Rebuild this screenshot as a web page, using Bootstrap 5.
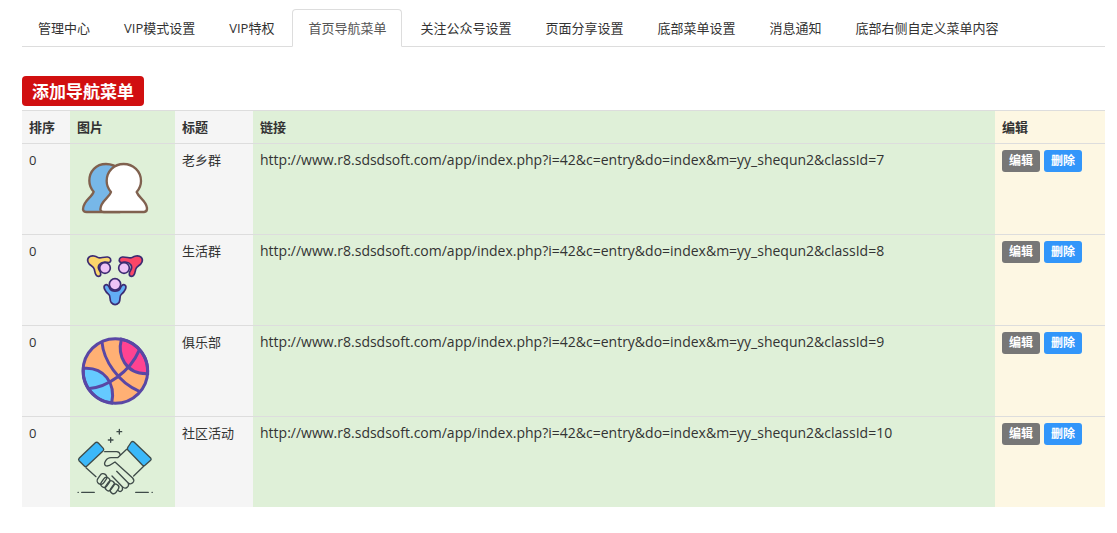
<!DOCTYPE html>
<html lang="zh-CN">
<head>
<meta charset="utf-8">
<meta name="viewport" content="width=device-width, initial-scale=1">
<title>首页导航菜单</title>
<link href="https://cdn.jsdelivr.net/npm/bootstrap@5.3.0/dist/css/bootstrap.min.css" rel="stylesheet">
<style>
body{font-family:"Open Sans","Noto Sans CJK SC",sans-serif;font-size:13px;line-height:20px;color:#333}
.page{padding:9px 12px 24px 22px}
.nav-tabs{--bs-nav-tabs-border-color:#ddd;--bs-nav-tabs-border-radius:4px;--bs-nav-link-color:#333;--bs-nav-link-hover-color:#333;--bs-nav-tabs-link-active-color:#555;--bs-nav-tabs-link-active-border-color:#ddd #ddd #fff;--bs-nav-link-padding-x:15px;--bs-nav-link-padding-y:8px;column-gap:2px;margin-bottom:29px}
.add-btn{background:#d10f10;color:#fff;font-size:17px;line-height:22px;font-weight:700;padding:5px 10px 3px;border-radius:4px;margin-bottom:4px}
.add-btn:hover{background:#b00c0d;color:#fff}
.menu-table{--bs-table-color:#333;border-top:1px solid #ddd;table-layout:fixed}
.menu-table>thead{vertical-align:middle}
.menu-table>:not(caption)>*>*{padding:6px 7px;border-width:0;color:#333}
.menu-table th{font-weight:700}
.menu-table tbody tr{border-top:1px solid #ddd}
.menu-table .link-cell{font-size:14px}
.c-gray{background:#f5f5f5!important}
.c-green{background:#dff0d8!important}
.c-cream{background:#fdf7e3!important}
.w-sort{width:48px}.w-pic{width:105px}.w-title{width:78px}.w-edit{width:110px}
.op{font-size:12px;line-height:14px;font-weight:700;padding:4px 7px;border:0;border-radius:3px;color:#fff}
.op-edit{background:#777}
.op-del{background:#3296fa}
.op:hover{color:#fff;opacity:.9}
.pic{display:block;width:76px;height:76px;margin:1px 0}
</style>
</head>
<body>
<main class="page">
<ul class="nav nav-tabs">
<li class="nav-item"><a class="nav-link" href="#">管理中心</a></li>
<li class="nav-item"><a class="nav-link" href="#">VIP模式设置</a></li>
<li class="nav-item"><a class="nav-link" href="#">VIP特权</a></li>
<li class="nav-item"><a class="nav-link active" aria-current="page" href="#">首页导航菜单</a></li>
<li class="nav-item"><a class="nav-link" href="#">关注公众号设置</a></li>
<li class="nav-item"><a class="nav-link" href="#">页面分享设置</a></li>
<li class="nav-item"><a class="nav-link" href="#">底部菜单设置</a></li>
<li class="nav-item"><a class="nav-link" href="#">消息通知</a></li>
<li class="nav-item"><a class="nav-link" href="#">底部右侧自定义菜单内容</a></li>
</ul>
<button type="button" class="btn border-0 d-block add-btn">添加导航菜单</button>
<table class="table menu-table mb-0">
<thead>
<tr><th scope="col" class="c-gray w-sort">排序</th><th scope="col" class="c-green w-pic">图片</th><th scope="col" class="c-gray w-title">标题</th><th scope="col" class="c-green">链接</th><th scope="col" class="c-cream w-edit">编辑</th></tr>
</thead>
<tbody>
<tr>
<td class="c-gray">0</td>
<td class="c-green"><svg class="pic" viewBox="21 3 228 228" fill="none" stroke="#80614f" stroke-width="7" stroke-linejoin="round" aria-hidden="true">
<path fill="#77b7e8" d="M108 42C78 42 58 64 58 92C58 106 64 117 71 125C66 143 39 152 39 178Q40 186 50 186H150V60Q132 42 108 42Z"/>
<path fill="#fff" d="M161 42C132 42 110 64 110 93C110 106 115 117 123 126C117 145 92 152 91 178Q92 186 102 186H222Q232 185 231 174C228 151 207 145 200 126C208 117 213 107 213 93C213 64 190 42 161 42Z"/></svg></td>
<td class="c-gray">老乡群</td>
<td class="c-green link-cell">http://www.r8.sdsdsoft.com/app/index.php?i=42&amp;c=entry&amp;do=index&amp;m=yy_shequn2&amp;classId=7</td>
<td class="c-cream"><div class="d-flex gap-1"><button type="button" class="btn op op-edit">编辑</button><button type="button" class="btn op op-del">删除</button></div></td>
</tr>
<tr>
<td class="c-gray">0</td>
<td class="c-green"><svg class="pic" viewBox="21 6 228 228" fill="none" stroke="#3c2b72" stroke-width="5" stroke-linejoin="round" aria-hidden="true">
<path fill="#fbd66b" d="M72 48C58 46 50 55 54 66C59 79 70 76 73 88C75 97 76 109 85 109C94 109 94 99 88 91C80 78 90 67 103 66C111 65 115 70 120 66C125 59 121 52 113 51C98 50 91 57 83 52Q78 49 72 48Z"/>
<path fill="#fb4667" d="M198 48C212 46 220 55 216 66C211 79 200 76 197 88C195 97 194 109 185 109C176 109 176 99 182 91C190 78 180 67 167 66C159 65 155 70 150 66C145 59 149 52 157 51C172 50 179 57 187 52Q192 49 198 48Z"/>
<path fill="#62adf5" d="M104 136C99 141 105 155 116 163C123 168 117 178 124 188Q135 200 147 188C153 178 147 168 154 163C165 155 171 141 166 136C158 130 153 139 151 145C145 156 125 156 119 145C117 139 112 130 104 136Z"/>
<g fill="#efc3f6"><circle cx="105" cy="84" r="16"/><circle cx="162" cy="84" r="16"/><circle cx="135" cy="133" r="17"/></g></svg></td>
<td class="c-gray">生活群</td>
<td class="c-green link-cell">http://www.r8.sdsdsoft.com/app/index.php?i=42&amp;c=entry&amp;do=index&amp;m=yy_shequn2&amp;classId=8</td>
<td class="c-cream"><div class="d-flex gap-1"><button type="button" class="btn op op-edit">编辑</button><button type="button" class="btn op op-del">删除</button></div></td>
</tr>
<tr>
<td class="c-gray">0</td>
<td class="c-green"><svg class="pic" viewBox="21 9 228 228" fill="none" stroke="#5947a5" stroke-width="9" aria-hidden="true">
<circle cx="136" cy="123" r="97" fill="#ffb074" stroke="none"/>
<path fill="#ff4391" d="M154 28C142 75 165 133 233 131A97 97 0 0 0 154 28Z"/>
<path fill="#65caff" d="M40 115C102 110 138 160 125 219A97 97 0 0 1 40 115Z"/>
<path d="M96 36C100 90 145 158 208 184M54 176C110 174 180 125 207 62"/>
<circle cx="136" cy="123" r="97"/></svg></td>
<td class="c-gray">俱乐部</td>
<td class="c-green link-cell">http://www.r8.sdsdsoft.com/app/index.php?i=42&amp;c=entry&amp;do=index&amp;m=yy_shequn2&amp;classId=9</td>
<td class="c-cream"><div class="d-flex gap-1"><button type="button" class="btn op op-edit">编辑</button><button type="button" class="btn op op-del">删除</button></div></td>
</tr>
<tr>
<td class="c-gray">0</td>
<td class="c-green"><svg class="pic" viewBox="21 12 228 228" fill="none" stroke="#3f4b49" stroke-width="4" stroke-linecap="round" stroke-linejoin="round" aria-hidden="true">
<g fill="#3bb8fa"><path d="M76 68Q81 65 85 69L100 85Q103 89 99 93L51 138Q47 142 43 138L27 122Q24 118 28 114Z"/><path d="M184 66Q188 63 192 66L242 114Q245 118 242 121L225 136Q221 139 217 135L173 89Q171 85 174 81Z"/></g>
<path d="M104 95H140Q149 96 150 103M170 88L143 113H123C108 113 99 132 107 137C116 142 126 131 135 126L188 174C197 184 184 198 174 188L140 154M48 143L78 170M221 139L191 168M174 188C180 200 166 210 157 200L126 168M157 202C160 212 151 219 144 211"/>
<rect x="85" y="160" width="22" height="34" rx="11" transform="rotate(35 96 177)"/>
<rect x="96" y="171" width="20" height="32" rx="10" transform="rotate(35 106 187)"/>
<rect x="110" y="181" width="19" height="32" rx="9" transform="rotate(35 119 197)"/>
<rect x="124" y="192" width="19" height="30" rx="9" transform="rotate(35 134 207)"/>
<path d="M24 217H25M35 217H73M197 217H235M246 217H247M122 53V67M115 60H129M148 28V42M141 35H155"/></svg></td>
<td class="c-gray">社区活动</td>
<td class="c-green link-cell">http://www.r8.sdsdsoft.com/app/index.php?i=42&amp;c=entry&amp;do=index&amp;m=yy_shequn2&amp;classId=10</td>
<td class="c-cream"><div class="d-flex gap-1"><button type="button" class="btn op op-edit">编辑</button><button type="button" class="btn op op-del">删除</button></div></td>
</tr>
</tbody>
</table>
</main>
<script src="https://cdn.jsdelivr.net/npm/bootstrap@5.3.0/dist/js/bootstrap.bundle.min.js"></script>
</body>
</html>
